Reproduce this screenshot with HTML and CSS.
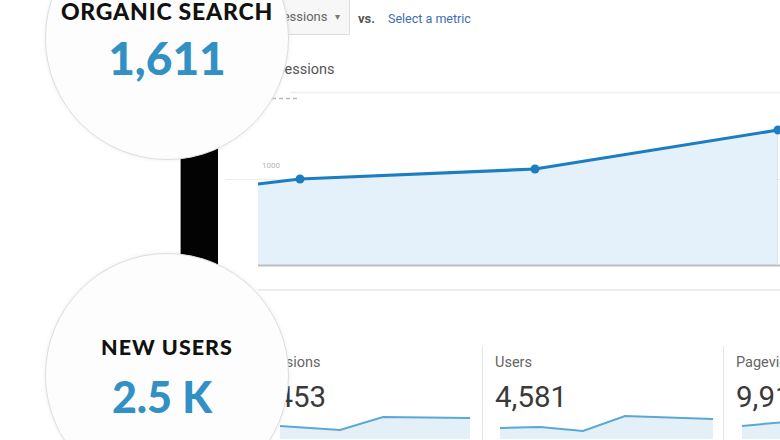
FILE: index.html
```html
<!DOCTYPE html>
<html>
<head>
<meta charset="utf-8">
<link rel="stylesheet" href="styles.css">
</head>
<body>
<div class="page">
  <div class="dash">
    <div class="toolbar">
      <div class="dropdown"><span>Sessions</span><span class="caret">▾</span></div>
      <span class="vs">vs.</span>
      <span class="link">Select a metric</span>
    </div>
    <div class="heading">Sessions</div>
    <svg class="chart" width="562" height="180" viewBox="218 88 562 180">
      <line x1="290" y1="92.5" x2="780" y2="92.5" stroke="#eeeeee" stroke-width="1.5"/>
      <line x1="265" y1="98.5" x2="298" y2="98.5" stroke="#bbbbbb" stroke-width="1.5" stroke-dasharray="4 3"/>
      <line x1="226" y1="179.5" x2="780" y2="179.5" stroke="#eeeeee" stroke-width="1"/>
      <text x="262" y="168" font-family="Roboto, sans-serif" font-size="8" fill="#b5b5b5">1000</text>
      <polygon points="258,184 300,179 535,169 778,130 778,265 258,265" fill="#e4f1fa"/>
      <line x1="258" y1="265.5" x2="780" y2="265.5" stroke="#b9bdc1" stroke-width="2"/>
      <line x1="777.5" y1="130" x2="777.5" y2="265" stroke="#d6e6f0" stroke-width="1"/>
      <polyline points="258,184 300,179 535,169 778,130" fill="none" stroke="#1c7ec0" stroke-width="3.2" stroke-linejoin="round"/>
      <circle cx="300" cy="179" r="4.5" fill="#1c7ec0"/>
      <circle cx="535" cy="169" r="4.5" fill="#1c7ec0"/>
      <circle cx="778" cy="130" r="4.5" fill="#1c7ec0"/>
    </svg>
    <div class="separator"></div>
    <div class="metrics">
      <div class="metric m-first">
        <div class="m-label">Sessions</div>
        <div class="m-value">6,453</div>
        <svg class="spark" width="241" height="28" viewBox="0 0 241 28">
          <polygon points="38,15 98,19 141,6 228,7 228,28 38,28" fill="#e3f0f8"/>
          <polyline points="38,15 98,19 141,6 228,7" fill="none" stroke="#5ba8d4" stroke-width="2"/>
        </svg>
      </div>
      <div class="metric">
        <div class="m-label">Users</div>
        <div class="m-value">4,581</div>
        <svg class="spark" width="241" height="28" viewBox="0 0 241 28">
          <polygon points="17,17 57,16 100,20 142,5 230,8 230,28 17,28" fill="#e3f0f8"/>
          <polyline points="17,17 57,16 100,20 142,5 230,8" fill="none" stroke="#5ba8d4" stroke-width="2"/>
        </svg>
      </div>
      <div class="metric m-last">
        <div class="m-label">Pageviews</div>
        <div class="m-value">9,912</div>
        <svg class="spark" width="241" height="28" viewBox="0 0 241 28">
          <polygon points="18,15 60,11 60,28 18,28" fill="#e3f0f8"/>
          <polyline points="18,15 60,11" fill="none" stroke="#5ba8d4" stroke-width="2"/>
        </svg>
      </div>
    </div>
  </div>

  <div class="device"></div>

  <div class="lens lens-top">
    <div class="lens-title">ORGANIC SEARCH</div>
    <div class="lens-num num-top">1,611</div>
  </div>
  <div class="lens lens-bottom">
    <div class="lens-title title-bottom">NEW USERS</div>
    <div class="lens-num num-bottom">2.5 K</div>
  </div>
</div>
</body>
</html>
```

FILE: styles.css
```css
html, body {
  margin: 0;
  padding: 0;
  background: #ffffff;
}

.page {
  position: relative;
  width: 780px;
  height: 440px;
  overflow: hidden;
  background: #ffffff;
  font-family: Roboto, "Liberation Sans", Arial, sans-serif;
}

.dash {
  margin-left: 218px;
  width: 562px;
}

.toolbar {
  display: flex;
  align-items: center;
  height: 36px;
  padding-left: 50px;
}

.dropdown {
  box-sizing: border-box;
  height: 35px;
  width: 82px;
  display: flex;
  align-items: center;
  justify-content: space-between;
  padding: 0 9px 0 6px;
  margin-top: -2px;
  border: 1px solid #dcdcdc;
  border-top: none;
  background: #f7f7f7;
  font-size: 13px;
  color: #666;
  border-radius: 0 0 2px 2px;
}

.caret {
  font-size: 10px;
  color: #777;
}

.vs {
  margin-left: 8px;
  font-size: 13px;
  font-weight: bold;
  color: #555;
}

.link {
  margin-left: 13px;
  font-size: 12.5px;
  color: #3d6eb2;
}

.heading {
  margin-top: 25px;
  padding-left: 58px;
  font-size: 14.5px;
  line-height: 18px;
  color: #555;
}

.chart {
  display: block;
  margin-top: 9px;
}

.separator {
  margin-top: 21px;
  margin-left: 40px;
  height: 2px;
  background: #ececec;
}

.metrics {
  display: flex;
  margin-top: 55px;
  margin-left: 24px;
}

.metric {
  box-sizing: border-box;
  width: 241px;
  flex: none;
  border-right: 1px solid #e4e4e4;
  padding-top: 9px;
  height: 95px;
}

.m-last {
  border-right: none;
}

.m-label {
  padding-left: 12px;
  font-size: 14.5px;
  line-height: 16px;
  color: #666;
}

.m-first .m-label {
  padding-left: 20px;
}

.m-value {
  padding-left: 12px;
  margin-top: 11px;
  font-size: 29.5px;
  line-height: 31px;
  color: #3a3a3a;
}

.spark {
  display: block;
  margin-top: -2px;
}

.device {
  position: absolute;
  left: 180px;
  top: 100px;
  width: 38px;
  height: 200px;
  background: #030303;
  border-left: 1px solid #9a9a9a;
  box-sizing: border-box;
}

.lens {
  position: absolute;
  left: 45px;
  width: 244px;
  height: 244px;
  box-sizing: border-box;
  border-radius: 50%;
  background: #fdfdfd;
  border: 1px solid #dedede;
  box-shadow: 0 0 4px rgba(0, 0, 0, 0.08);
  display: flex;
  flex-direction: column;
  align-items: center;
  font-family: Lato, "Open Sans", sans-serif;
}

.lens-top {
  top: -84px;
  padding-top: 83px;
}

.lens-bottom {
  top: 253px;
  padding-top: 83px;
}

.lens-title {
  font-size: 23px;
  line-height: 22px;
  font-weight: 900;
  color: #111;
  letter-spacing: 0.8px;
}

.title-bottom {
  font-size: 21.5px;
  line-height: 21px;
  letter-spacing: 1px;
}

.lens-num {
  font-weight: 900;
  color: #3290c5;
  line-height: 1;
}

.num-top {
  font-size: 46px;
  margin-top: 13px;
}

.num-bottom {
  font-size: 43px;
  margin-top: 17px;
  margin-left: -10px;
}
```
